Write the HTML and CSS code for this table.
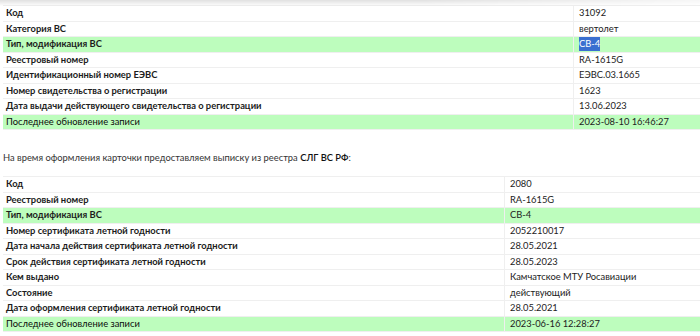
FILE: index.html
```html
<!DOCTYPE html>
<html>
<head>
<meta charset="utf-8">
<link rel="stylesheet" href="styles.css">
</head>
<body>
<div class="shade"></div>
<div class="page">
  <table class="info t1">
    <tr><td class="k">Код</td><td class="v">31092</td></tr>
    <tr><td class="k">Категория ВС</td><td class="v">вертолет</td></tr>
    <tr class="hl"><td class="k">Тип, модификация ВС</td><td class="v"><span class="sel">СВ-4</span></td></tr>
    <tr><td class="k">Реестровый номер</td><td class="v">RA-1615G</td></tr>
    <tr><td class="k">Идентификационный номер ЕЭВС</td><td class="v">ЕЭВС.03.1665</td></tr>
    <tr><td class="k">Номер свидетельства о регистрации</td><td class="v">1623</td></tr>
    <tr><td class="k">Дата выдачи действующего свидетельства о регистрации</td><td class="v">13.06.2023</td></tr>
    <tr class="hl"><td class="k plain">Последнее обновление записи</td><td class="v">2023-08-10 16:46:27</td></tr>
  </table>
  <p class="note">На время оформления карточки предоставляем выписку из реестра <span class="em">СЛГ ВС РФ</span>:</p>
  <table class="info t2">
    <tr><td class="k">Код</td><td class="v">2080</td></tr>
    <tr><td class="k">Реестровый номер</td><td class="v">RA-1615G</td></tr>
    <tr class="hl"><td class="k">Тип, модификация ВС</td><td class="v">СВ-4</td></tr>
    <tr><td class="k">Номер сертификата летной годности</td><td class="v">2052210017</td></tr>
    <tr><td class="k">Дата начала действия сертификата летной годности</td><td class="v">28.05.2021</td></tr>
    <tr><td class="k">Срок действия сертификата летной годности</td><td class="v">28.05.2023</td></tr>
    <tr><td class="k">Кем выдано</td><td class="v">Камчатское МТУ Росавиации</td></tr>
    <tr><td class="k">Состояние</td><td class="v">действующий</td></tr>
    <tr><td class="k">Дата оформления сертификата летной годности</td><td class="v">28.05.2021</td></tr>
    <tr class="hl"><td class="k plain">Последнее обновление записи</td><td class="v">2023-06-16 12:28:27</td></tr>
  </table>
</div>
</body>
</html>
```

FILE: styles.css
```css
html, body {
  margin: 0;
  padding: 0;
  background: #fff;
}
body {
  font-family: Lato, "Noto Sans", sans-serif;
  font-size: 9.35px;
  color: #222;
}
.shade {
  position: absolute;
  left: 0;
  top: 0;
  width: 100%;
  height: 6px;
  background: linear-gradient(to bottom, rgba(0,0,0,0.12), rgba(0,0,0,0));
  -webkit-mask-image: linear-gradient(to right, #000 60%, rgba(0,0,0,0.3));
  pointer-events: none;
}
.page {
  padding: 5px 0 0 3px;
}
.info {
  border-collapse: collapse;
  width: 697px;
}
.info td {
  padding: 1px 3px 1px 3px;
  line-height: 12.5px;
  vertical-align: middle;
  border-bottom: 1px solid #efefef;
  white-space: nowrap;
}
.info tr:first-child td {
  border-top: 1px solid #efefef;
}
.info td.k {
  font-weight: 700;
  color: #1c1c1c;
}
.info td.k.plain {
  font-weight: 400;
  color: #0c0c0c;
}
.info td.v {
  border-left: 1px solid #efefef;
  padding-left: 5px;
  color: #222;
}
.t1 td.k { width: 564px; }
.t2 td.k { width: 495px; }
.info tr.hl td {
  background: #bdfdbd;
}
.sel {
  background: #3a6fd0;
  color: #fff;
  padding: 1px 0 2px;
}
.note {
  margin: 21px 0 12px 0;
  line-height: 13px;
  color: #333;
}
.em {
  color: #111;
  font-weight: 600;
}
```
